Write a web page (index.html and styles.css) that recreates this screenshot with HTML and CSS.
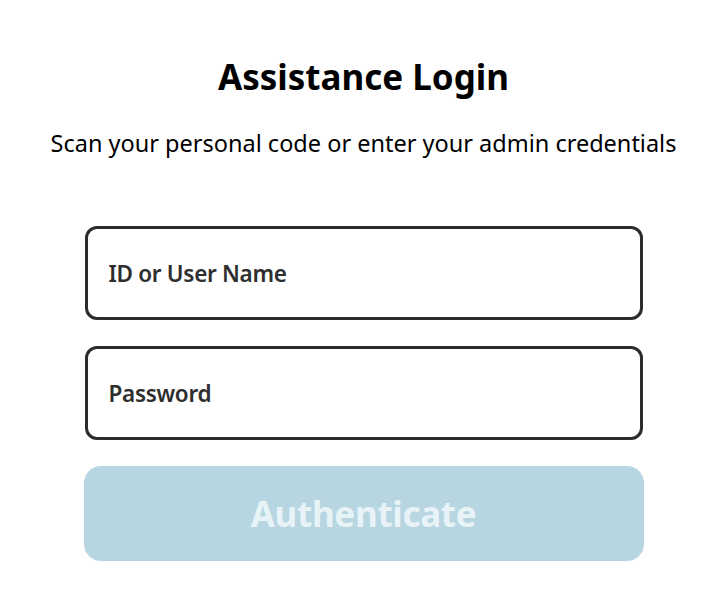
FILE: index.html
```html
<!DOCTYPE html>
<html>
<head>
<meta charset="utf-8">
<link rel="stylesheet" href="styles.css">
</head>
<body>
<main class="login">
  <h1 class="title">Assistance Login</h1>
  <p class="subtitle">Scan your personal code or enter your admin credentials</p>
  <form class="form">
    <div class="field"><span class="placeholder">ID or User Name</span></div>
    <div class="field"><span class="placeholder">Password</span></div>
    <button type="button" class="btn">Authenticate</button>
  </form>
</main>
</body>
</html>
```
FILE: styles.css
```css
html, body {
  margin: 0;
  padding: 0;
  background: #ffffff;
}
body {
  font-family: "Noto Sans", "Open Sans", sans-serif;
  color: #000;
}
.login {
  display: flex;
  flex-direction: column;
  align-items: center;
  padding-top: 56px;
  padding-left: 2px;
}
.title {
  margin: 0;
  font-size: 35px;
  font-weight: 700;
  line-height: 42px;
}
.subtitle {
  margin: 30px 0 0;
  font-size: 23.5px;
  line-height: 30px;
  white-space: nowrap;
}
.form {
  margin-top: 68px;
  display: flex;
  flex-direction: column;
  gap: 26px;
  width: 560px;
}
.field {
  box-sizing: border-box;
  height: 94px;
  margin: 0 1px;
  border: 3px solid #2b2b2b;
  border-radius: 12px;
  display: flex;
  align-items: center;
  padding-left: 21px;
}
.placeholder {
  font-size: 22.5px;
  font-weight: 600;
  color: #2e2e2e;
  letter-spacing: -0.3px;
}
.btn {
  height: 95px;
  border: none;
  border-radius: 17px;
  background: #b7d6e2;
  color: #e8f3f7;
  font-family: inherit;
  font-size: 35px;
  font-weight: 700;
  letter-spacing: -0.3px;
}
```
